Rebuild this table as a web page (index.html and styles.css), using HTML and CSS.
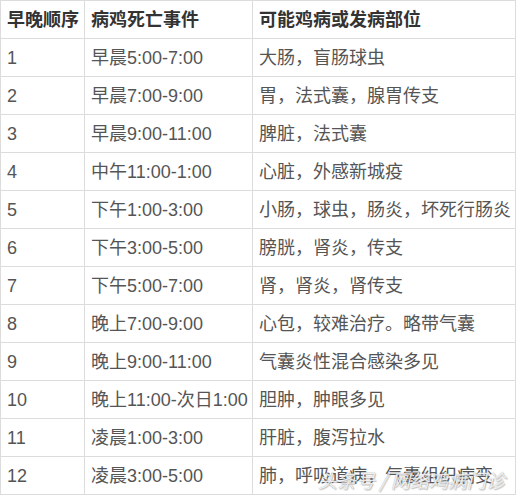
FILE: index.html
```html
<!DOCTYPE html>
<html lang="zh">
<head>
<meta charset="utf-8">
<link rel="stylesheet" href="styles.css">
</head>
<body>
<div class="wrap">
<table class="tbl">
<colgroup><col class="c1"><col class="c2"><col class="c3"></colgroup>
<tr class="head"><td>早晚顺序</td><td>病鸡死亡事件</td><td>可能鸡病或发病部位</td></tr>
<tr><td>1</td><td>早晨5:00-7:00</td><td>大肠，盲肠球虫</td></tr>
<tr><td>2</td><td>早晨7:00-9:00</td><td>胃，法式囊，腺胃传支</td></tr>
<tr><td>3</td><td>早晨9:00-11:00</td><td>脾脏，法式囊</td></tr>
<tr><td>4</td><td>中午11:00-1:00</td><td>心脏，外感新城疫</td></tr>
<tr><td>5</td><td>下午1:00-3:00</td><td>小肠，球虫，肠炎，坏死行肠炎</td></tr>
<tr><td>6</td><td>下午3:00-5:00</td><td>膀胱，肾炎，传支</td></tr>
<tr><td>7</td><td>下午5:00-7:00</td><td>肾，肾炎，肾传支</td></tr>
<tr><td>8</td><td>晚上7:00-9:00</td><td>心包，较难治疗。略带气囊</td></tr>
<tr><td>9</td><td>晚上9:00-11:00</td><td>气囊炎性混合感染多见</td></tr>
<tr><td>10</td><td>晚上11:00-次日1:00</td><td>胆肿，肿眼多见</td></tr>
<tr><td>11</td><td>凌晨1:00-3:00</td><td>肝脏，腹泻拉水</td></tr>
<tr><td>12</td><td>凌晨3:00-5:00</td><td>肺，呼吸道病，气囊组织病变</td></tr>
</table>
<div class="mark">头条号 / 网络鸡病门诊</div>
</div>
</body>
</html>
```
FILE: styles.css
```css
html, body {
  margin: 0;
  padding: 0;
  background: #fff;
}
.wrap {
  position: relative;
  width: 517px;
  height: 498px;
  overflow: hidden;
}
.tbl {
  border-collapse: collapse;
  table-layout: fixed;
  width: 515px;
  font-family: "Liberation Sans", "Noto Sans CJK SC", sans-serif;
  font-size: 18px;
  color: #555;
}
.c1 { width: 84px; }
.c2 { width: 168px; }
.c3 { width: 263px; }
.tbl td {
  border: 1px solid #dcdcdc;
  height: 37px;
  padding: 0 0 0 6px;
  white-space: nowrap;
  overflow: hidden;
  vertical-align: middle;
  line-height: 20px;
}
.head td {
  font-weight: bold;
  color: #333;
}
.mark {
  position: absolute;
  left: 318px;
  top: 468px;
  font-family: "Noto Sans CJK SC", sans-serif;
  font-size: 19px;
  line-height: 24px;
  font-style: italic;
  color: rgba(255, 255, 255, 0.85);
  text-shadow: 0 0 1px rgba(90, 90, 90, 0.6), 1px 1px 1px rgba(120, 120, 120, 0.4);
  white-space: nowrap;
}
```
